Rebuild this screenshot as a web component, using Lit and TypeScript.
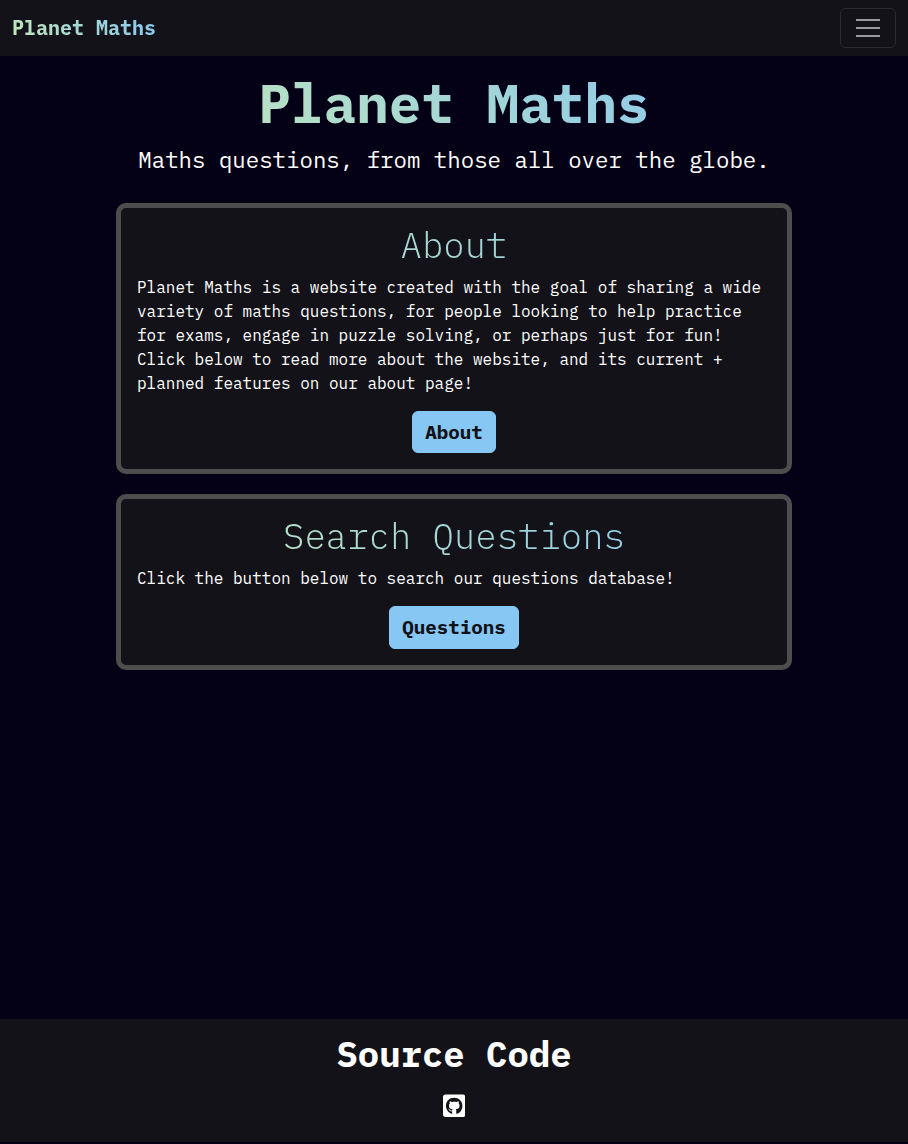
import { LitElement, html, css } from "lit";
import { customElement } from "lit/decorators.js";

@customElement("app-root")
export class AppRoot extends LitElement {
  static styles = css`
    :host {
      display: flex;
      flex-direction: column;
      box-sizing: border-box;
      min-height: 100vh;
      padding-bottom: 2px;
      background: #040015;
      color: #fff;
      font: 16px/24px "IBM Plex Mono", "Liberation Mono", monospace;
    }
    *, *::before, *::after { box-sizing: border-box; }
    h1, h2, p { margin: 0; }
    .gradient {
      background: linear-gradient(45deg, #c5e8b7, #84c5f4);
      -webkit-background-clip: text;
      background-clip: text;
      color: transparent;
    }
    .nav {
      display: flex;
      align-items: center;
      justify-content: space-between;
      height: 56px;
      padding: 0 12px;
      background: #131219;
    }
    .brand { font-size: 20px; line-height: 30px; font-weight: 700; text-decoration: none; }
    .toggler {
      display: flex;
      align-items: center;
      justify-content: center;
      width: 56px;
      height: 40px;
      padding: 0;
      border: 1px solid #2b2a30;
      border-radius: 6px;
      background: transparent;
    }
    .main {
      flex: 1;
      display: flex;
      flex-direction: column;
      align-items: center;
      padding-top: 14px;
    }
    .column { width: 676px; }
    .title { font-size: 54.36px; line-height: 65.2px; font-weight: 700; text-align: center; }
    .lead { margin: 8px 0 26.1px; font-size: 22.4px; line-height: 33.6px; text-align: center; }
    .card {
      display: flex;
      flex-direction: column;
      margin-bottom: 20px;
      padding: 16px;
      border: 5px solid #4d4d4e;
      border-radius: 10px;
      background: #131219;
    }
    .heading {
      margin-bottom: 8px;
      font-size: 35.62px;
      line-height: 42.7px;
      font-weight: 300;
      text-align: center;
    }
    .button {
      align-self: center;
      margin-top: 16px;
      padding: 6px 12px;
      border: 1px solid #87c7f3;
      border-radius: 6px;
      background: #87c7f3;
      color: #111118;
      font-size: 19.2px;
      line-height: 28.8px;
      font-weight: 700;
      text-decoration: none;
    }
    .footer {
      display: flex;
      flex-direction: column;
      align-items: center;
      height: 123px;
      padding-top: 14px;
      background: #131219;
    }
    .source { font-size: 35.62px; line-height: 42.7px; font-weight: 700; }
    .github { display: flex; margin-top: 17.5px; color: #fff; }
  `;

  private card(title: string, text: string, action: string) {
    return html`
      <section class="card">
        <h2 class="heading gradient">${title}</h2>
        <p>${text}</p>
        <a class="button">${action}</a>
      </section>
    `;
  }

  render() {
    return html`
      <nav class="nav">
        <a class="brand gradient">Planet Maths</a>
        <button class="toggler" aria-label="Toggle navigation">
          <svg width="30" height="30" viewBox="0 0 30 30" fill="none" stroke="#99999d" stroke-width="2">
            <path d="M3 7h24M3 15h24M3 23h24" />
          </svg>
        </button>
      </nav>
      <main class="main">
        <div class="column">
          <h1 class="title gradient">Planet Maths</h1>
          <p class="lead">Maths questions, from those all over the globe.</p>
          ${this.card(
            "About",
            "Planet Maths is a website created with the goal of sharing a wide variety of maths questions, for people looking to help practice for exams, engage in puzzle solving, or perhaps just for fun! Click below to read more about the website, and its current + planned features on our about page!",
            "About",
          )}
          ${this.card("Search Questions", "Click the button below to search our questions database!", "Questions")}
        </div>
      </main>
      <footer class="footer">
        <h1 class="source">Source Code</h1>
        <a class="github" aria-label="GitHub">
          <svg width="22.4" height="25.6" viewBox="0 0 448 512" fill="currentColor">
            <path d="M400 32H48C21.5 32 0 53.5 0 80v352c0 26.5 21.5 48 48 48h352c26.5 0 48-21.5 48-48V80c0-26.5-21.5-48-48-48zM277.3 415.7c-8.4 1.5-11.5-3.7-11.5-8 0-5.4.2-33 .2-55.3 0-15.6-5.2-25.5-11.3-30.7 37-4.1 76-9.2 76-73.1 0-18.2-6.5-27.3-17.1-39 1.7-4.3 7.4-22-1.7-45-13.9-4.3-45.7 17.9-45.7 17.9-13.2-3.7-27.5-5.6-41.6-5.6-14.1 0-28.4 1.9-41.6 5.6 0 0-31.8-22.2-45.7-17.9-9.1 22.9-3.5 40.6-1.7 45-10.6 11.7-15.6 20.8-15.6 39 0 63.6 37.3 69 74.3 73.1-4.8 4.3-9.1 11.7-10.6 22.3-9.5 4.3-33.8 11.7-48.3-13.9-9.1-15.8-25.5-17.1-25.5-17.1-16.2-.2-1.1 10.2-1.1 10.2 10.8 5 18.4 24.2 18.4 24.2 9.7 29.7 56.1 19.7 56.1 19.7 0 13.9.2 36.5.2 40.6 0 4.3-3 9.5-11.5 8-66-22.1-112.2-84.9-112.2-158.3 0-91.8 70.2-161.5 162-161.5S388 165.6 388 257.4c.1 73.4-44.7 136.3-110.7 158.3z" />
          </svg>
        </a>
      </footer>
    `;
  }
}
